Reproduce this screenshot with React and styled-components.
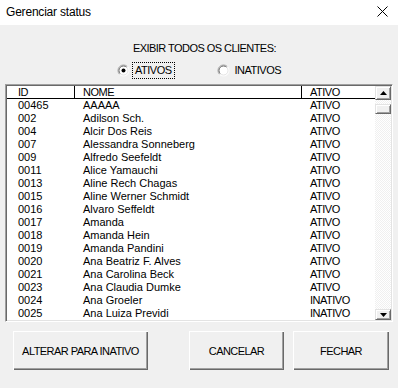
import React from "react";
import styled, { createGlobalStyle } from "styled-components";

const Global = createGlobalStyle`
  html, body { margin: 0; padding: 0; background: #f0f0f0; }
  body { font-family: "Liberation Sans", Arial, sans-serif; }
`;

const Window = styled.div`
  width: 398px;
  height: 388px;
  background: #f0f0f0;
  display: flex;
  flex-direction: column;
  overflow: hidden;
  color: #000;
  font-family: "Liberation Sans", Arial, sans-serif;
  font-size: 11px;
`;

const TitleBar = styled.div`
  height: 25px;
  background: #fff;
  display: flex;
  align-items: center;
  justify-content: space-between;
  padding: 0 10px 2px 6px;
  box-sizing: border-box;
  font-size: 12px;
  letter-spacing: -0.2px;
`;

const CloseIcon = styled.svg`
  width: 11px;
  height: 11px;
  display: block;
`;

const Caption = styled.div`
  margin-top: 16px;
  padding-left: 133px;
  height: 14px;
  line-height: 14px;
  letter-spacing: -0.55px;
`;

const RadioRow = styled.div`
  display: flex;
  align-items: center;
  margin-top: 7px;
  padding-left: 117px;
  height: 17px;
  letter-spacing: -0.5px;
`;

const RadioItem = styled.label`
  display: flex;
  align-items: center;
  gap: ${(p) => (p.$focused ? "3px" : "3px")};
  margin-right: ${(p) => (p.$gap || 0)}px;
`;

const RadioLabel = styled.span`
  display: block;
  line-height: 15px;
  padding: 0 2px;
  outline: ${(p) => (p.$focused ? "1px dotted #000" : "none")};
  outline-offset: 0px;
`;

const ListBox = styled.div`
  margin: 5px 5px 0 5px;
  height: 238px;
  box-sizing: border-box;
  border-top: 1px solid #a0a0a0;
  border-left: 1px solid #a0a0a0;
  border-right: 1px solid #fff;
  border-bottom: 1px solid #fff;
  box-shadow: inset 1px 1px 0 #696969, inset -1px -1px 0 #e3e3e3;
  padding: 1px;
  display: flex;
  background: #fff;
`;

const ListArea = styled.div`
  flex: 1;
  display: flex;
  flex-direction: column;
  overflow: hidden;
`;

const Grid = styled.div`
  display: grid;
  grid-template-columns: 67px 227px 1fr;
  height: 13px;
  line-height: ${(p) => (p.$header ? "12px" : "13px")};
  border-bottom: ${(p) => (p.$header ? "1px solid #000" : "none")};
  box-sizing: border-box;
  white-space: nowrap;
`;

const Cell = styled.div`
  padding-left: ${(p) => (p.$first ? "10px" : "8px")};
  border-left: 1px solid ${(p) => (p.$sep ? "#000" : "transparent")};
  letter-spacing: ${(p) => (p.$caps ? "-0.5px" : "0")};
  overflow: hidden;
`;

const ScrollBar = styled.div`
  width: 16px;
  display: flex;
  flex-direction: column;
  background-color: #fff;
  background-image: repeating-conic-gradient(#f0f0f0 0 25%, #ffffff 0 50%);
  background-size: 2px 2px;
`;

const ScrollButton = styled.div`
  height: ${(p) => p.$h}px;
  margin-top: ${(p) => p.$mt || 0}px;
  box-sizing: border-box;
  background: #f0f0f0;
  border-top: 1px solid #e3e3e3;
  border-left: 1px solid #e3e3e3;
  border-right: 1px solid #696969;
  border-bottom: 1px solid #696969;
  box-shadow: inset 1px 1px 0 #fff, inset -1px -1px 0 #a0a0a0;
  display: flex;
  align-items: center;
  justify-content: center;
`;

const Spacer = styled.div`
  flex: 1;
`;

const ButtonRow = styled.div`
  display: flex;
  margin-top: 9px;
  padding-left: 13px;
`;

const Button = styled.button`
  width: ${(p) => p.$w}px;
  height: 39px;
  margin-right: ${(p) => p.$mr || 0}px;
  background: #f0f0f0;
  border: none;
  padding: 0;
  box-shadow: inset 1px 1px 0 #fff, inset -1px -1px 0 #696969, inset -2px -2px 0 #a0a0a0;
  font-family: "Liberation Sans", Arial, sans-serif;
  font-size: 11px;
  letter-spacing: -0.55px;
  color: #000;
`;

const rows = [
  ["00465", "AAAAA", "ATIVO"],
  ["002", "Adilson Sch.", "ATIVO"],
  ["004", "Alcir Dos Reis", "ATIVO"],
  ["007", "Alessandra Sonneberg", "ATIVO"],
  ["009", "Alfredo Seefeldt", "ATIVO"],
  ["0011", "Alice Yamauchi", "ATIVO"],
  ["0013", "Aline Rech Chagas", "ATIVO"],
  ["0015", "Aline Werner Schmidt", "ATIVO"],
  ["0016", "Alvaro Seffeldt", "ATIVO"],
  ["0017", "Amanda", "ATIVO"],
  ["0018", "Amanda Hein", "ATIVO"],
  ["0019", "Amanda Pandini", "ATIVO"],
  ["0020", "Ana Beatriz F. Alves", "ATIVO"],
  ["0021", "Ana Carolina Beck", "ATIVO"],
  ["0023", "Ana Claudia Dumke", "ATIVO"],
  ["0024", "Ana Groeler", "INATIVO"],
  ["0025", "Ana Luiza Previdi", "INATIVO"],
];

function Radio({ checked }) {
  return (
    <svg width="13" height="13" viewBox="0 0 13 13">
      <circle cx="6.5" cy="6.5" r="5.5" fill="#fff" />
      <path d="M2.6 10.4 A5.5 5.5 0 0 1 10.4 2.6" fill="none" stroke="#a0a0a0" strokeWidth="1" />
      <path d="M3.3 9.7 A4.5 4.5 0 0 1 9.7 3.3" fill="none" stroke="#696969" strokeWidth="1" />
      <path d="M10.4 2.6 A5.5 5.5 0 0 1 2.6 10.4" fill="none" stroke="#ffffff" strokeWidth="1" />
      <path d="M9.7 3.3 A4.5 4.5 0 0 1 3.3 9.7" fill="none" stroke="#e3e3e3" strokeWidth="1" />
      {checked && <circle cx="6.5" cy="6.5" r="2" fill="#000" />}
    </svg>
  );
}

export default function App() {
  return (
    <>
      <Global />
      <Window>
        <TitleBar>
          <span>Gerenciar status</span>
          <CloseIcon viewBox="0 0 11 11">
            <path d="M0.5 0.5 L10.5 10.5 M10.5 0.5 L0.5 10.5" stroke="#000" strokeWidth="1" />
          </CloseIcon>
        </TitleBar>
        <Caption>EXIBIR TODOS OS CLIENTES:</Caption>
        <RadioRow>
          <RadioItem $focused $gap={43}>
            <Radio checked />
            <RadioLabel $focused>ATIVOS</RadioLabel>
          </RadioItem>
          <RadioItem>
            <Radio />
            <RadioLabel>INATIVOS</RadioLabel>
          </RadioItem>
        </RadioRow>
        <ListBox>
          <ListArea>
            <Grid $header>
              <Cell $first $caps>ID</Cell>
              <Cell $sep $caps>NOME</Cell>
              <Cell $sep $caps>ATIVO</Cell>
            </Grid>
            {rows.map((r) => (
              <Grid key={r[0]}>
                <Cell $first>{r[0]}</Cell>
                <Cell>{r[1]}</Cell>
                <Cell $caps>{r[2]}</Cell>
              </Grid>
            ))}
          </ListArea>
          <ScrollBar>
            <ScrollButton $h={14}>
              <svg width="7" height="4" viewBox="0 0 7 4"><path d="M3.5 0 L7 4 L0 4 Z" fill="#000" /></svg>
            </ScrollButton>
            <ScrollButton $h={10} $mt={4} />
            <Spacer />
            <ScrollButton $h={11}>
              <svg width="7" height="4" viewBox="0 0 7 4"><path d="M0 0 L7 0 L3.5 4 Z" fill="#000" /></svg>
            </ScrollButton>
          </ScrollBar>
        </ListBox>
        <ButtonRow>
          <Button $w={135} $mr={41}>ALTERAR PARA INATIVO</Button>
          <Button $w={95} $mr={9}>CANCELAR</Button>
          <Button $w={96}>FECHAR</Button>
        </ButtonRow>
      </Window>
    </>
  );
}
